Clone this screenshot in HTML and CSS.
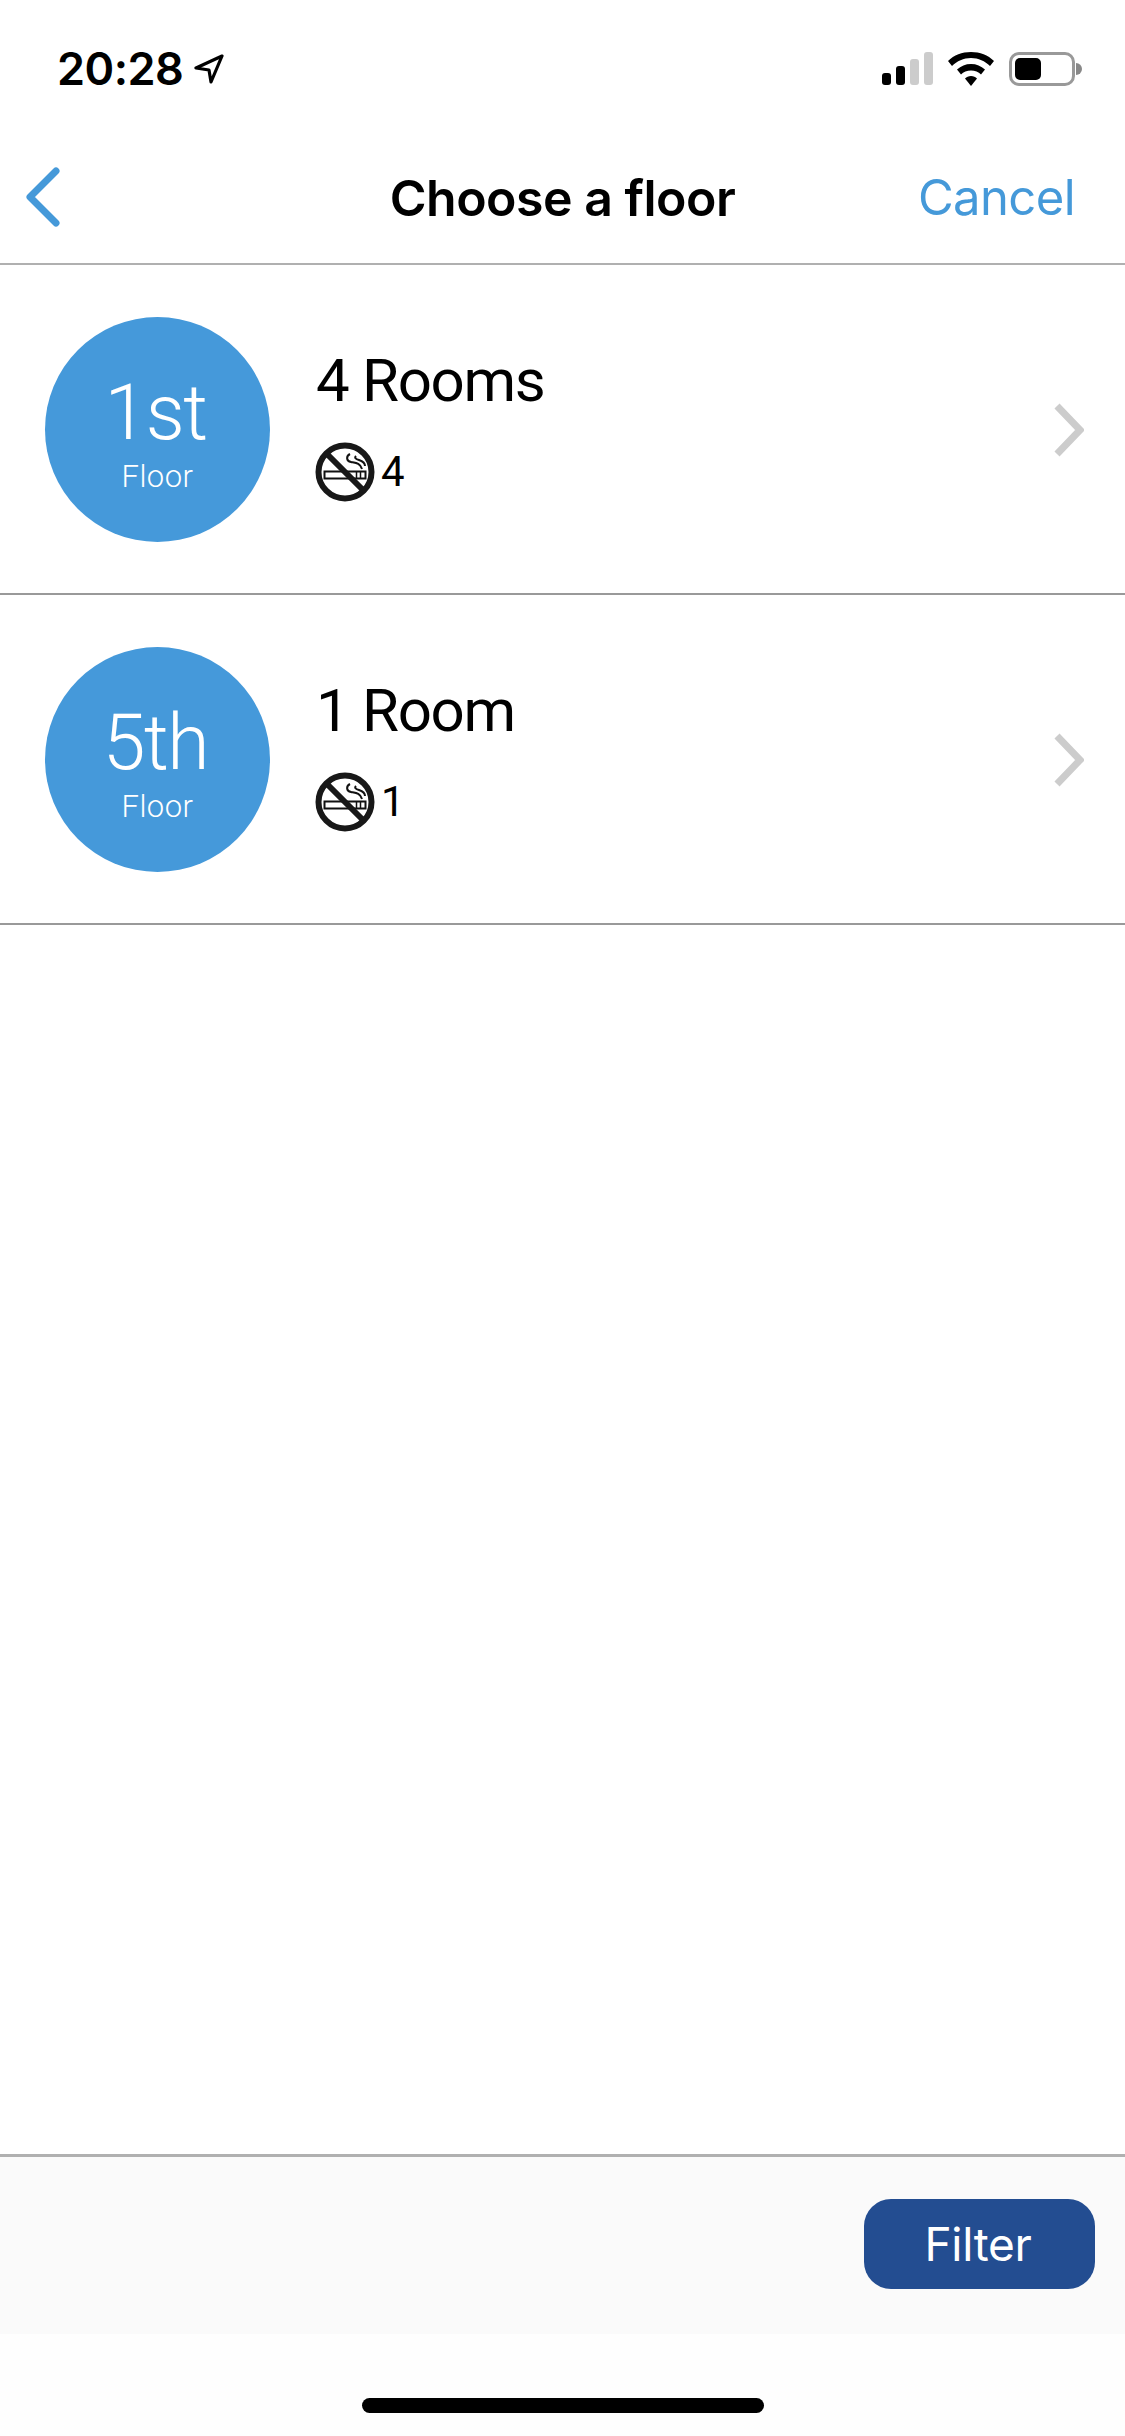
FILE: index.html
```html
<!DOCTYPE html>
<html lang="en">
<head>
    <meta charset="UTF-8">
    <meta name="viewport" content="width=device-width, initial-scale=1.0">
    <title>Choose a floor</title>
    <link rel="stylesheet" href="styles.css">
</head>
<body>
    <div class="screen">
        <div class="status-bar">
            <div class="status-left">
                <span class="time">20:28</span>
                <svg class="location" viewBox="0 0 30 30" width="30" height="30">
                    <path d="M28 2 L2 14 L15 16 L17 28 Z" fill="none" stroke="#000" stroke-width="3.2" stroke-linejoin="round"/>
                </svg>
            </div>
            <div class="status-right">
                <div class="signal">
                    <span class="bar bar-1"></span>
                    <span class="bar bar-2"></span>
                    <span class="bar bar-3 off"></span>
                    <span class="bar bar-4 off"></span>
                </div>
                <svg class="wifi" viewBox="0 0 46 34" width="46" height="34">
                    <path d="M23 0 C32 0 40 3 46 9 L42 14 C37 9 30.500 6 23 6 C15.500 6 9 9 4 14 L0 9 C6 3 14 0 23 0 Z"/>
                    <path d="M23 12 C28.500 12 33 14 37 17.500 L33 22.500 C30.500 20 27 18.500 23 18.500 C19 18.500 15.500 20 13 22.500 L9 17.500 C13 14 17.500 12 23 12 Z"/>
                    <path d="M23 24 C25.500 24 27.500 25 29 26.500 L23 34 L17 26.500 C18.500 25 20.500 24 23 24 Z"/>
                </svg>
                <div class="battery">
                    <div class="battery-body"><div class="battery-fill"></div></div>
                    <div class="battery-nub"></div>
                </div>
            </div>
        </div>

        <div class="nav-bar">
            <svg class="back" viewBox="0 0 36 60" width="36" height="60">
                <path d="M31 4 L5 30 L31 56" fill="none" stroke="#4599d9" stroke-width="7" stroke-linecap="round" stroke-linejoin="round"/>
            </svg>
            <div class="nav-title">Choose a floor</div>
            <div class="nav-cancel">Cancel</div>
        </div>

        <div class="floor-list">
            <div class="floor-row">
                <div class="floor-badge">
                    <span class="floor-num">1st</span>
                    <span class="floor-word">Floor</span>
                </div>
                <div class="floor-info">
                    <div class="floor-rooms">4 Rooms</div>
                    <div class="floor-smoke">
                        <svg class="no-smoke" viewBox="0 0 60 60" width="60" height="60">
                            <rect x="9.500" y="29.500" width="41" height="7" fill="none" stroke="#111" stroke-width="2"/>
                            <path d="M41.500 29 V37 M45.500 29 V37" stroke="#111" stroke-width="1.500"/>
                            <path d="M35 12 C31 14 31 19 36 20 C41 21 45 21 47 27 M41 14 C39 16 41 17 44 18 C47 19 50 21 50 24" fill="none" stroke="#111" stroke-width="2"/>
                            <circle cx="30" cy="30" r="26.500" fill="none" stroke="#181818" stroke-width="6"/>
                            <path d="M11 11 L49 49" stroke="#181818" stroke-width="6"/>
                        </svg>
                        <span class="smoke-count">4</span>
                    </div>
                </div>
                <svg class="chevron" viewBox="0 0 30 54" width="30" height="54">
                    <path d="M3 3 L26 27 L3 51" fill="none" stroke="#ccc" stroke-width="7"/>
                </svg>
            </div>
            <div class="floor-row">
                <div class="floor-badge">
                    <span class="floor-num">5th</span>
                    <span class="floor-word">Floor</span>
                </div>
                <div class="floor-info">
                    <div class="floor-rooms">1 Room</div>
                    <div class="floor-smoke">
                        <svg class="no-smoke" viewBox="0 0 60 60" width="60" height="60">
                            <rect x="9.500" y="29.500" width="41" height="7" fill="none" stroke="#111" stroke-width="2"/>
                            <path d="M41.500 29 V37 M45.500 29 V37" stroke="#111" stroke-width="1.500"/>
                            <path d="M35 12 C31 14 31 19 36 20 C41 21 45 21 47 27 M41 14 C39 16 41 17 44 18 C47 19 50 21 50 24" fill="none" stroke="#111" stroke-width="2"/>
                            <circle cx="30" cy="30" r="26.500" fill="none" stroke="#181818" stroke-width="6"/>
                            <path d="M11 11 L49 49" stroke="#181818" stroke-width="6"/>
                        </svg>
                        <span class="smoke-count">1</span>
                    </div>
                </div>
                <svg class="chevron" viewBox="0 0 30 54" width="30" height="54">
                    <path d="M3 3 L26 27 L3 51" fill="none" stroke="#ccc" stroke-width="7"/>
                </svg>
            </div>
        </div>

        <div class="footer-bar">
            <button class="filter-button">Filter</button>
        </div>
        <div class="home-area">
            <div class="home-indicator"></div>
        </div>
    </div>
</body>
</html>
```

FILE: styles.css
```css
* {
    box-sizing: border-box;
}
body {
    margin: 0;
    background-color: #fff;
    font-family: "Inter", "Liberation Sans", sans-serif;
    color: #000;
}
.screen {
    width: 1125px;
    height: 2436px;
    display: flex;
    flex-direction: column;
}

/* status bar */
.status-bar {
    height: 132px;
    flex: none;
    display: flex;
    justify-content: space-between;
    align-items: flex-start;
    padding: 52px 43px 0 57px;
}
.status-left {
    display: flex;
    align-items: center;
    gap: 11px;
    height: 34px;
}
.time {
    font-size: 45px;
    font-weight: 600;
    line-height: 34px;
    letter-spacing: -0.5px;
}
.status-right {
    display: flex;
    align-items: flex-start;
    gap: 15px;
}
.signal {
    display: flex;
    align-items: flex-end;
    gap: 5px;
    height: 33px;
}
.bar {
    width: 9px;
    border-radius: 3px;
    background-color: #000;
}
.bar-1 { height: 12px; }
.bar-2 { height: 19px; }
.bar-3 { height: 26px; }
.bar-4 { height: 33px; }
.bar.off {
    background-color: #ccc;
}
.battery {
    display: flex;
    align-items: center;
    height: 34px;
}
.battery-body {
    width: 66px;
    height: 34px;
    border: 3px solid #999;
    border-radius: 10px;
    padding: 3px;
}
.battery-fill {
    width: 26px;
    height: 22px;
    background-color: #000;
    border-radius: 5px;
}
.battery-nub {
    width: 6px;
    height: 12px;
    margin-left: 1px;
    background-color: #888;
    border-radius: 0 6px 6px 0;
}

/* nav */
.nav-bar {
    height: 133px;
    flex: none;
    position: relative;
    display: flex;
    align-items: center;
    justify-content: space-between;
    padding: 0 50px 0 25px;
    border-bottom: 2px solid #b0b0b0;
}
.nav-title {
    position: absolute;
    left: 0;
    right: 0;
    text-align: center;
    font-size: 50px;
    font-weight: 600;
    letter-spacing: -0.5px;
}
.nav-cancel {
    font-size: 49px;
    letter-spacing: -0.6px;
    color: #4599d9;
}
.back {
    margin-bottom: 2px;
}

/* rows */
.floor-list {
    flex: 1;
}
.floor-row {
    height: 330px;
    display: flex;
    align-items: center;
    padding: 0 41px 0 45px;
    border-bottom: 2px solid #999;
}
.floor-badge {
    width: 225px;
    height: 225px;
    flex: none;
    border-radius: 50%;
    background-color: #4599da;
    color: #fff;
    display: flex;
    flex-direction: column;
    align-items: center;
    justify-content: center;
    font-family: "Roboto", sans-serif;
}
.floor-num {
    font-size: 77px;
    font-weight: 300;
    letter-spacing: -1.500px;
    line-height: 84px;
    margin: 7px 4px 0 0;
}
.floor-word {
    font-size: 31px;
    font-weight: 300;
    letter-spacing: 0.5px;
    line-height: 36px;
    margin-top: 4px;
}
.floor-info {
    flex: 1;
    margin-left: 45px;
    font-family: "Roboto", sans-serif;
    padding-bottom: 2px;
}
.floor-rooms {
    font-size: 60px;
    letter-spacing: -1.300px;
    line-height: 70px;
    margin: -8px 0 0 1px;
}
.floor-smoke {
    display: flex;
    align-items: center;
    gap: 6px;
    margin-top: 26px;
}
.smoke-count {
    font-size: 42px;
    line-height: 60px;
}
.chevron {
    flex: none;
    margin-top: 2px;
}

/* footer */
.footer-bar {
    height: 180px;
    flex: none;
    display: flex;
    justify-content: flex-end;
    align-items: flex-start;
    padding: 42px 30px 0 0;
    background-color: #fafafa;
    border-top: 3px solid #b0b0b0;
}
.filter-button {
    width: 231px;
    height: 90px;
    border: none;
    border-radius: 27px;
    background-color: #234d91;
    color: #fff;
    font-family: "Inter", "Liberation Sans", sans-serif;
    font-size: 46px;
    letter-spacing: -0.3px;
    padding: 0 3px 0 0;
}
.home-area {
    height: 102px;
    flex: none;
    background-color: #fefefe;
    padding-top: 64px;
    display: flex;
    justify-content: center;
}
.home-indicator {
    width: 402px;
    height: 15px;
    border-radius: 8px;
    background-color: #000;
}
```
